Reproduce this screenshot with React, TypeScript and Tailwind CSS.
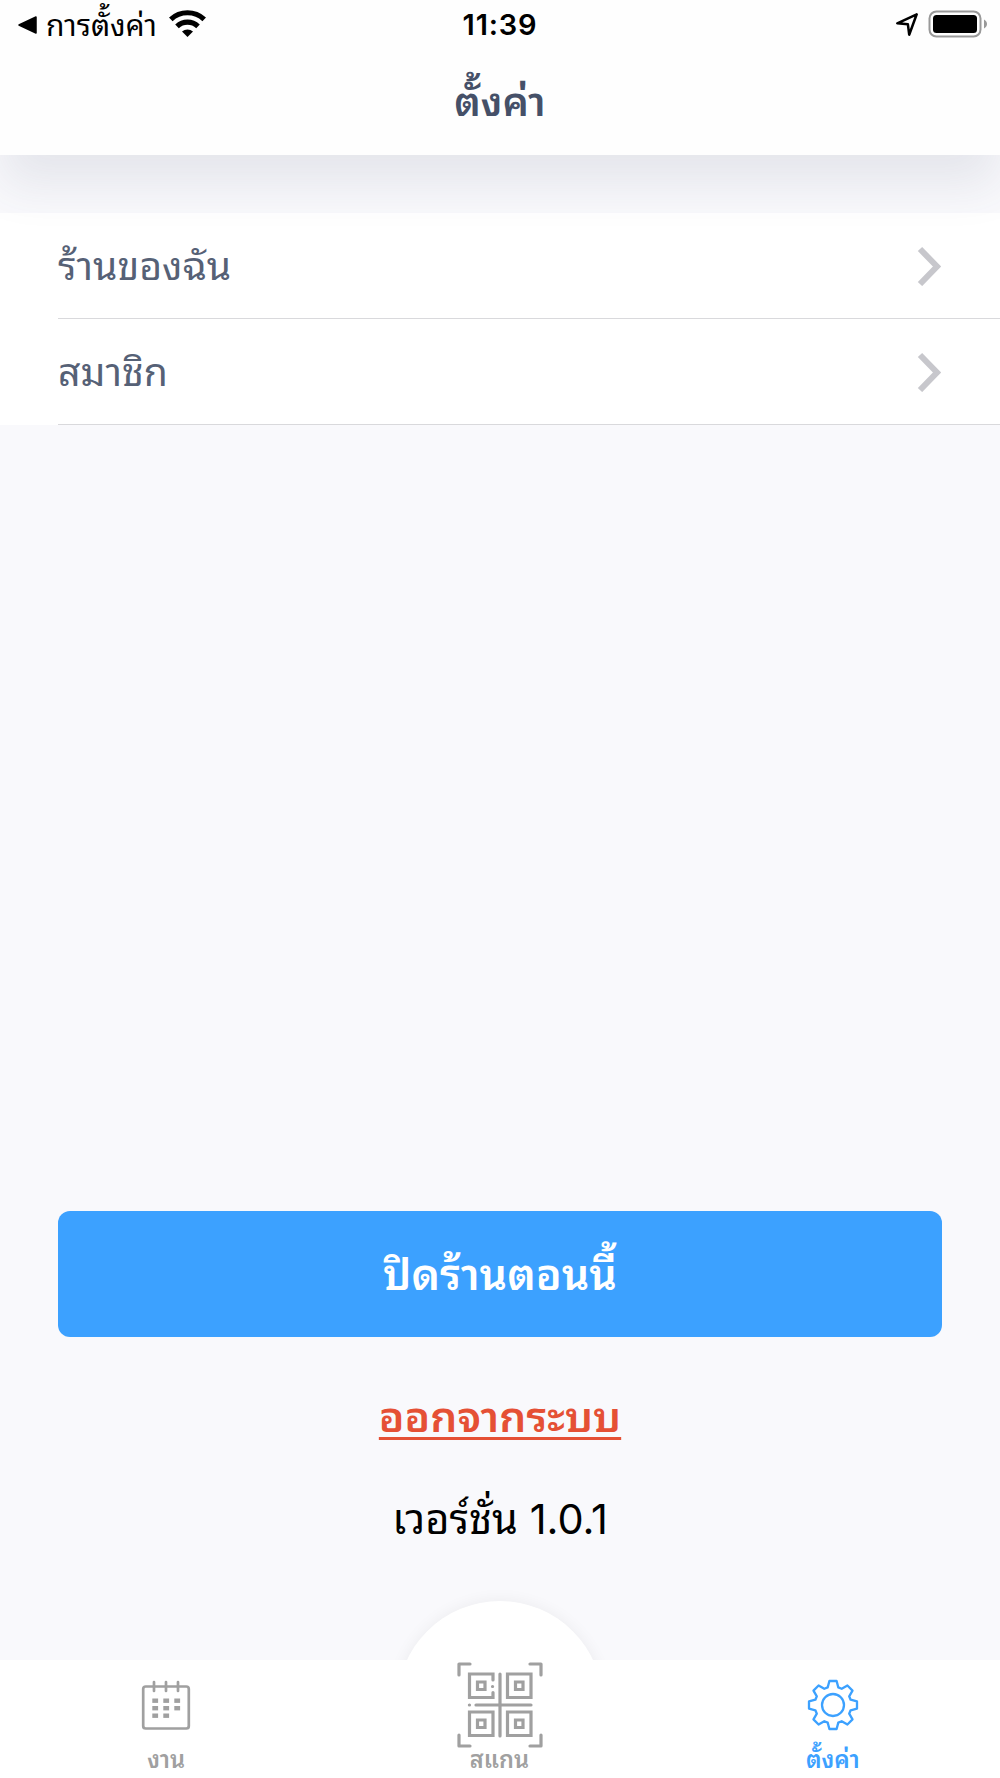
import type { ReactNode } from 'react';

const menuItems = ['ร้านของฉัน', 'สมาชิก'];

// one gear tooth, repeated every 45deg around the centre
const TOOTH = [[-5.3, -17.6], [-3.6, -24], [3.6, -24], [5.3, -17.6]];

const gearPoints = Array.from({ length: 8 }, (_, i) => {
  const a = (i * Math.PI) / 4;
  return TOOTH.map(([x, y]) => {
    const px = x * Math.cos(a) - y * Math.sin(a);
    const py = x * Math.sin(a) + y * Math.cos(a);
    return `${px.toFixed(2)},${py.toFixed(2)}`;
  }).join(' ');
}).join(' ');

function WifiIcon() {
  return (
    <svg className="mb-[3px]" width="37" height="27" viewBox="0 0 37 27">
      <g fill="none" stroke="#000" strokeWidth="5.2">
        <path d="M1.8 9.3a24.5 24.5 0 0 1 33.4 0" />
        <path d="M8 16.3a15.2 15.2 0 0 1 21 0" />
      </g>
      <path d="M13 21.500a8.2 8.2 0 0 1 11 0L18.5 27z" />
    </svg>
  );
}

function LocationIcon() {
  return (
    <svg width="23" height="23" viewBox="0 0 23 23" fill="none" stroke="#000" strokeWidth="2.5" strokeLinejoin="round">
      <path d="M20.700 1.300 1.300 10.300l10.600 1 1.300 10.400z" />
    </svg>
  );
}

function BatteryIcon() {
  return (
    <svg width="60" height="28" viewBox="0 0 60 28">
      <rect x="1.5" y="1.5" width="51" height="25" rx="7" fill="none" stroke="#999" strokeWidth="2" />
      <rect x="5" y="5" width="44" height="18" rx="3.5" />
      <path d="M56 9.5c4 2 4 7 0 9z" fill="#999" />
    </svg>
  );
}

function ChevronIcon() {
  return (
    <svg width="25" height="40" viewBox="0 0 25 40" fill="none" stroke="#c7c7cc" strokeWidth="6">
      <path d="M3 3l17 17.500L3 38" />
    </svg>
  );
}

function CalendarIcon() {
  const dots = [[12, 19], [23, 19], [34, 19], [12, 26.5], [23, 26.5], [34, 26.5], [12, 34], [23, 34]];
  return (
    <svg width="50" height="50" viewBox="0 0 50 50">
      <g fill="none" stroke="#a0a0a0" strokeWidth="2.7" strokeLinecap="round">
        <rect x="2.2" y="6.5" width="45.6" height="42" rx="2.5" />
        <path d="M13 2v9M25 2v9M37 2v9" />
      </g>
      {dots.map(([x, y]) => (
        <rect key={`${x}-${y}`} x={x - 0.7} y={y - 0.5} width="5.8" height="4.4" fill="#a0a0a0" />
      ))}
    </svg>
  );
}

function ScanIcon() {
  return (
    <svg width="86" height="86" viewBox="0 0 86 86" fill="none" stroke="#a0a0a0" strokeWidth="3.2" strokeLinecap="round" strokeLinejoin="round">
      <path d="M2 13V2h11M73 2h11v11M84 73v11H73M13 84H2V73" />
      <path strokeLinejoin="miter" d="M36 18v-6H12.500v23.500H36v-5" />
      <path strokeLinejoin="miter" d="M50.500 12H74v23.500H50.500zM12.500 50H36v23.500H12.500zM50.500 50H74v23.500H50.500z" />
      <path strokeLinejoin="miter" d="M20.500 20h7.500v7.500h-7.500zM58.500 20H66v7.500h-7.500zM20.500 58h7.500v7.500h-7.500zM58.500 58H66v7.500h-7.500z" />
      <path d="M43 12v62M19 43h55M12.400 43h.1M35.500 24.500h.1" />
    </svg>
  );
}

function GearIcon() {
  return (
    <svg width="52" height="52" viewBox="-26 -26 52 52" fill="none" stroke="#3ca1ff" strokeWidth="2.300" strokeLinejoin="round">
      <polygon points={gearPoints} />
      <circle r="11" />
    </svg>
  );
}

function Tab({ label, active, children }: { label: string; active?: boolean; children: ReactNode }) {
  return (
    <button className="flex flex-col items-center justify-end h-full pb-[6px]">
      {children}
      <span className={`text-[23.5px] leading-[24px] mr-px font-semibold ${active ? 'text-[#3ca1ff]' : 'text-[#a0a0a0]'}`}>{label}</span>
    </button>
  );
}

export default function App() {
  return (
    <div className="w-[1000px] h-[1778px] flex flex-col bg-[#f9f9fc] overflow-hidden font-['Inter','Noto_Sans_Thai_Looped','Loma','Umpush','Waree','Garuda','Noto_Sans_Thai',sans-serif]">
      <header className="relative z-10 h-[155px] shrink-0 bg-[#fefefe] shadow-[0_32px_44px_-2px_rgba(69,80,104,0.105)]">
        <div className="grid grid-cols-3 h-[50px] items-center">
          <div className="flex items-center h-[48px] pl-[18px]">
            <svg width="19" height="18" viewBox="0 0 19 18">
              <path d="M1 9 18 1v16z" stroke="#000" strokeWidth="1.500" strokeLinejoin="round" />
            </svg>
            <span className="ml-[9px] mr-[12px] w-[111px] whitespace-nowrap text-[30px] leading-[48px] text-black">การตั้งค่า</span>
            <WifiIcon />
          </div>
          <span className="text-center text-[29px] leading-[50px] font-semibold tracking-[0.8px] text-black">11:39</span>
          <div className="flex items-center justify-end gap-[9px] pr-[12px] pb-[2px]">
            <LocationIcon />
            <BatteryIcon />
          </div>
        </div>
        <h1 className="text-center text-[40px] leading-[104px] font-semibold text-[#455068]">ตั้งค่า</h1>
      </header>

      <ul className="mt-[58px] bg-white">
        {menuItems.map((item) => (
          <li key={item} className="h-[106px] pl-[58px]">
            <div className="flex items-center justify-between h-full pr-[58px] border-b border-[#d9d9dc]">
              <span className="pt-[2px] text-[39.2px] text-[#566176]">{item}</span>
              <ChevronIcon />
            </div>
          </li>
        ))}
      </ul>

      <main className="flex-1 flex flex-col items-center justify-end px-[58px] pb-[109px]">
        <button className="w-full h-[126px] rounded-[12px] bg-[#3ca1ff] text-white text-[43px] font-semibold">ปิดร้านตอนนี้</button>
        <a href="#" className="mt-[54px] h-[52px] text-[42.6px] leading-[52px] font-semibold text-[#e55035] underline decoration-[3px] underline-offset-[5px]">ออกจากระบบ</a>
        <p className="mt-[46px] h-[62px] text-[41.500px] leading-[61px] text-black">เวอร์ชั่น 1.0.1</p>
      </main>

      <nav className="relative h-[118px] shrink-0">
        {/* raised bump behind the scan tab */}
        <div className="absolute left-[397px] -top-[59px] size-[206px] rounded-full bg-white shadow-[0_0_16px_rgba(0,0,0,0.06)]"></div>
        <div className="absolute inset-0 bg-white"></div>
        <div className="relative grid grid-cols-3 h-full">
          <Tab label="งาน"><div className="mb-[18px] mr-[2px]"><CalendarIcon /></div></Tab>
          <Tab label="สแกน"><ScanIcon /></Tab>
          <Tab label="ตั้งค่า" active><div className="mb-[17px] mr-px"><GearIcon /></div></Tab>
        </div>
      </nav>
    </div>
  );
}
